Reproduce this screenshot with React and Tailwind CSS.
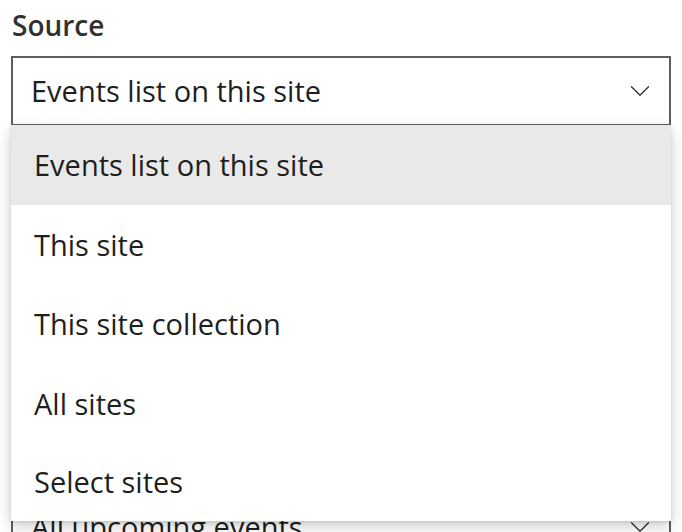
import { ChevronDown } from 'lucide-react'

const OPTIONS = ['Events list on this site', 'This site', 'This site collection', 'All sites', 'Select sites']
const HEIGHTS = ['h-[80px]', 'h-[79px]', 'h-[80px]', 'h-[79px]', 'h-[78px]']

function Field({ label, value, className = '' }) {
  return (
    <div className={className}>
      <div className="mb-[12px] pl-[1px] text-[28px] font-semibold leading-[38px] text-[#323130]">{label}</div>
      <div className="flex h-[70px] w-[660px] items-center justify-between border-2 border-[#605e5c] pl-[18px] pr-[12px]">
        <span className="text-[29px] text-[#201f1e]">{value}</span>
        <ChevronDown className="h-[34px] w-[34px] text-[#323130]" strokeWidth={0.9} />
      </div>
    </div>
  )
}

export default function App() {
  return (
    <div className="relative h-[532px] w-[682px] overflow-hidden bg-white px-[11px] pt-[6px]" style={{ fontFamily: '"Open Sans", "Noto Sans", sans-serif' }}>
      <Field label="Source" value="Events list on this site" />
      <Field label="Event list" value="Events" className="mt-[24px]" />
      <Field label="Date range" value="All upcoming events" className="mt-[172px]" />

      {/* open menu */}
      <div className="absolute left-[11px] top-[125px] w-[660px] bg-white shadow-[0_6px_14px_rgba(0,0,0,0.18),0_1px_4px_rgba(0,0,0,0.12)]">
        {OPTIONS.map((o, i) => (
          <div key={o} className={`flex items-center pl-[23px] text-[29px] text-[#201f1e] ${HEIGHTS[i]} ${i === 0 ? 'bg-[#e9e9e9]' : ''}`}>
            {o}
          </div>
        ))}
      </div>
    </div>
  )
}
